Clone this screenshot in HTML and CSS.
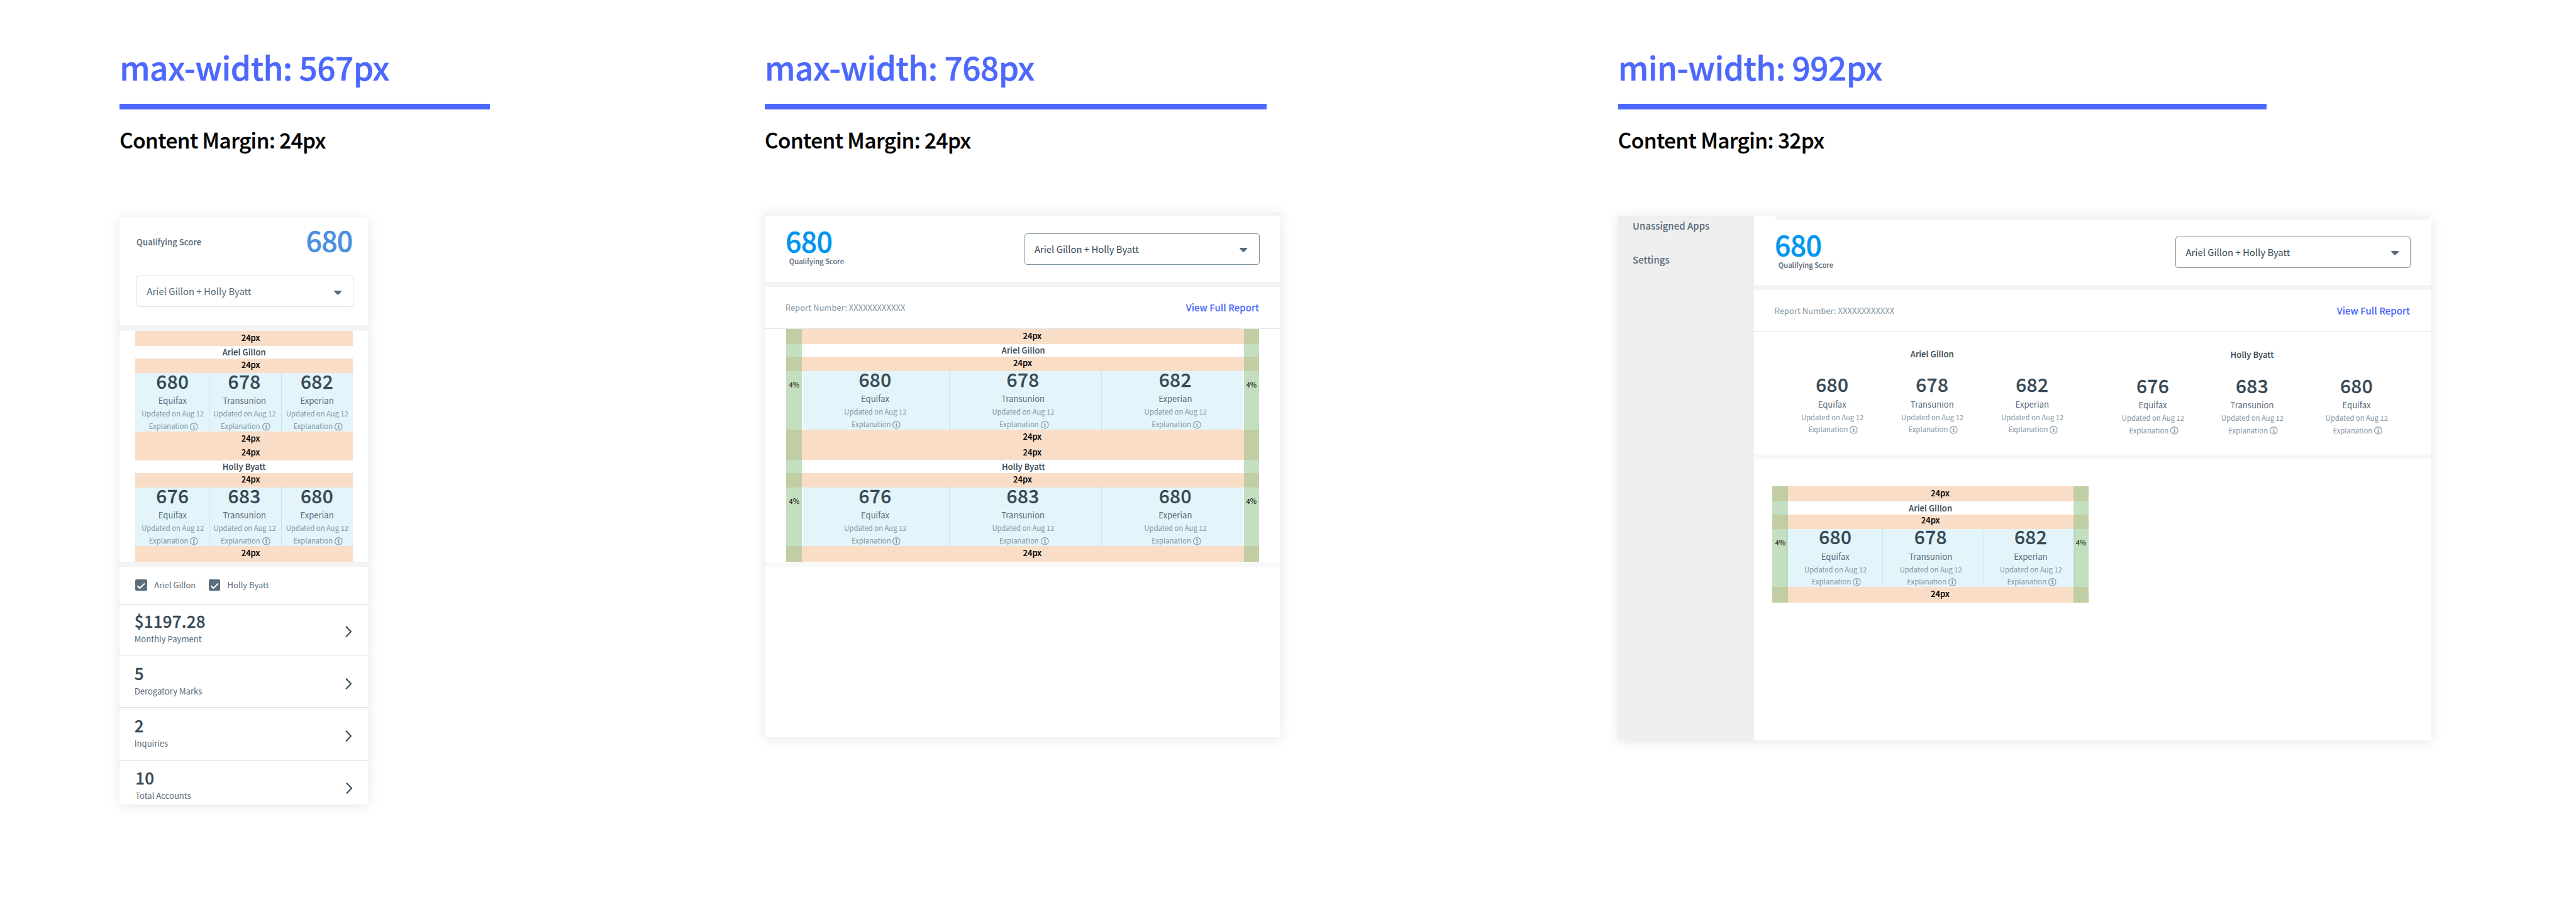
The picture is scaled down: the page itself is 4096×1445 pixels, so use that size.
FILE: index.html
```html
<!DOCTYPE html>
<html lang="en">
<head>
<meta charset="utf-8">
<title>Credit scores – breakpoints</title>
<link rel="stylesheet" href="styles.css">
</head>
<body>
<svg class="defs" aria-hidden="true">
  <symbol id="info" viewBox="0 0 24 24"><circle cx="12" cy="12" r="10.9" fill="none" stroke="currentColor" stroke-width="2.2"/><circle cx="12" cy="7" r="1.800" fill="currentColor"/><path d="M9.6 10.600h3v6.200M9.200 17.200h5.800" fill="none" stroke="currentColor" stroke-width="2.400"/></symbol>
  <symbol id="caret" viewBox="0 0 24 13"><path d="M2 0h20q3 .6 1.200 3L14 12q-2 2-4 0L.8 3Q-1 .6 2 0z" fill="currentColor"/></symbol>
  <symbol id="chevron" viewBox="0 0 20 35"><path d="M2 1.500L17.400 17.500 2 33.500" fill="none" stroke="currentColor" stroke-width="4"/></symbol>
  <symbol id="check" viewBox="0 0 36 36"><path d="M7 20l7 7L29 12.500" fill="none" stroke="currentColor" stroke-width="4.200"/></symbol>
</svg>
<main class="board">

  <section class="column column-sm">
    <h1 class="title">max-width: 567px</h1>
    <div class="rule"></div>
    <h2 class="subtitle">Content Margin: 24px</h2>
    <article class="card card-sm">
      <header class="head-sm">
        <div class="head-row">
          <span class="qualifying">Qualifying Score</span>
          <span class="score-big">680</span>
        </div>
        <div class="select select-light"><span>Ariel Gillon + Holly Byatt</span><svg class="caret"><use href="#caret"/></svg></div>
      </header>
      <div class="separator"></div>
      <div class="spec">
        <div class="band band-outer">24px</div>
        <div class="person">Ariel Gillon</div>
        <div class="band band-inner">24px</div>
        <div class="bureaus tinted">
          <div class="bureau"><b class="number">680</b><span class="name">Equifax</span><span class="updated">Updated on Aug 12</span><span class="explain">Explanation<svg class="info"><use href="#info"/></svg></span></div>
          <div class="bureau"><b class="number">678</b><span class="name">Transunion</span><span class="updated">Updated on Aug 12</span><span class="explain">Explanation<svg class="info"><use href="#info"/></svg></span></div>
          <div class="bureau"><b class="number">682</b><span class="name">Experian</span><span class="updated">Updated on Aug 12</span><span class="explain">Explanation<svg class="info"><use href="#info"/></svg></span></div>
        </div>
        <div class="band band-end">24px</div>
        <div class="band band-start">24px</div>
        <div class="person">Holly Byatt</div>
        <div class="band band-inner">24px</div>
        <div class="bureaus tinted">
          <div class="bureau"><b class="number">676</b><span class="name">Equifax</span><span class="updated">Updated on Aug 12</span><span class="explain">Explanation<svg class="info"><use href="#info"/></svg></span></div>
          <div class="bureau"><b class="number">683</b><span class="name">Transunion</span><span class="updated">Updated on Aug 12</span><span class="explain">Explanation<svg class="info"><use href="#info"/></svg></span></div>
          <div class="bureau"><b class="number">680</b><span class="name">Experian</span><span class="updated">Updated on Aug 12</span><span class="explain">Explanation<svg class="info"><use href="#info"/></svg></span></div>
        </div>
        <div class="band band-last">24px</div>
      </div>
      <div class="separator"></div>
      <div class="filters">
        <span class="box"><svg><use href="#check"/></svg></span><span class="filter-name">Ariel Gillon</span>
        <span class="box"><svg><use href="#check"/></svg></span><span class="filter-name">Holly Byatt</span>
      </div>
      <div class="stat stat-first"><div><b class="value">$1197.28</b><span class="label">Monthly Payment</span></div><svg class="chevron"><use href="#chevron"/></svg></div>
      <div class="stat"><div><b class="value">5</b><span class="label">Derogatory Marks</span></div><svg class="chevron"><use href="#chevron"/></svg></div>
      <div class="stat"><div><b class="value">2</b><span class="label">Inquiries</span></div><svg class="chevron"><use href="#chevron"/></svg></div>
      <div class="stat stat-last"><div><b class="value">10</b><span class="label">Total Accounts</span></div><svg class="chevron"><use href="#chevron"/></svg></div>
    </article>
  </section>

  <section class="column column-md">
    <h1 class="title">max-width: 768px</h1>
    <div class="rule"></div>
    <h2 class="subtitle">Content Margin: 24px</h2>
    <article class="card card-md">
      <div class="topline"></div>
      <header class="head">
        <div><div class="score-big">680</div><div class="qualifying-small">Qualifying Score</div></div>
        <div class="select"><span>Ariel Gillon + Holly Byatt</span><svg class="caret"><use href="#caret"/></svg></div>
      </header>
      <div class="separator"></div>
      <div class="report"><span>Report Number: XXXXXXXXXXXX</span><a>View Full Report</a></div>
      <div class="spec">
        <div class="band band-outer shifted">24px</div>
        <div class="person">Ariel Gillon</div>
        <div class="band band-inner">24px</div>
        <div class="bureaus tinted">
          <div class="bureau"><b class="number">680</b><span class="name">Equifax</span><span class="updated">Updated on Aug 12</span><span class="explain">Explanation<svg class="info"><use href="#info"/></svg></span></div>
          <div class="bureau"><b class="number">678</b><span class="name">Transunion</span><span class="updated">Updated on Aug 12</span><span class="explain">Explanation<svg class="info"><use href="#info"/></svg></span></div>
          <div class="bureau"><b class="number">682</b><span class="name">Experian</span><span class="updated">Updated on Aug 12</span><span class="explain">Explanation<svg class="info"><use href="#info"/></svg></span></div>
        </div>
        <div class="band band-end shifted">24px</div>
        <div class="band band-start shifted">24px</div>
        <div class="person">Holly Byatt</div>
        <div class="band band-inner">24px</div>
        <div class="bureaus tinted">
          <div class="bureau"><b class="number">676</b><span class="name">Equifax</span><span class="updated">Updated on Aug 12</span><span class="explain">Explanation<svg class="info"><use href="#info"/></svg></span></div>
          <div class="bureau"><b class="number">683</b><span class="name">Transunion</span><span class="updated">Updated on Aug 12</span><span class="explain">Explanation<svg class="info"><use href="#info"/></svg></span></div>
          <div class="bureau"><b class="number">680</b><span class="name">Experian</span><span class="updated">Updated on Aug 12</span><span class="explain">Explanation<svg class="info"><use href="#info"/></svg></span></div>
        </div>
        <div class="band band-last shifted">24px</div>
        <div class="gutter gutter-left"><span>4%</span><span>4%</span></div>
        <div class="gutter gutter-right"><span>4%</span><span>4%</span></div>
      </div>
      <div class="separator separator-pale"></div>
    </article>
  </section>

  <section class="column column-lg">
    <h1 class="title">min-width: 992px</h1>
    <div class="rule"></div>
    <h2 class="subtitle">Content Margin: 32px</h2>
    <article class="card card-lg">
      <nav class="sidebar"><a>Unassigned Apps</a><a>Settings</a></nav>
      <div class="content">
        <div class="topline"></div>
        <header class="head">
          <div><div class="score-big">680</div><div class="qualifying-small">Qualifying Score</div></div>
          <div class="select"><span>Ariel Gillon + Holly Byatt</span><svg class="caret"><use href="#caret"/></svg></div>
        </header>
        <div class="separator"></div>
        <div class="report"><span>Report Number: XXXXXXXXXXXX</span><a>View Full Report</a></div>
        <div class="groups">
          <div class="group">
            <div class="person">Ariel Gillon</div>
            <div class="bureaus">
              <div class="bureau"><b class="number">680</b><span class="name">Equifax</span><span class="updated">Updated on Aug 12</span><span class="explain">Explanation<svg class="info"><use href="#info"/></svg></span></div>
              <div class="bureau"><b class="number">678</b><span class="name">Transunion</span><span class="updated">Updated on Aug 12</span><span class="explain">Explanation<svg class="info"><use href="#info"/></svg></span></div>
              <div class="bureau"><b class="number">682</b><span class="name">Experian</span><span class="updated">Updated on Aug 12</span><span class="explain">Explanation<svg class="info"><use href="#info"/></svg></span></div>
            </div>
          </div>
          <div class="group group-second">
            <div class="person">Holly Byatt</div>
            <div class="bureaus">
              <div class="bureau"><b class="number">676</b><span class="name">Equifax</span><span class="updated">Updated on Aug 12</span><span class="explain">Explanation<svg class="info"><use href="#info"/></svg></span></div>
              <div class="bureau"><b class="number">683</b><span class="name">Transunion</span><span class="updated">Updated on Aug 12</span><span class="explain">Explanation<svg class="info"><use href="#info"/></svg></span></div>
              <div class="bureau"><b class="number">680</b><span class="name">Equifax</span><span class="updated">Updated on Aug 12</span><span class="explain">Explanation<svg class="info"><use href="#info"/></svg></span></div>
            </div>
          </div>
        </div>
        <div class="separator separator-pale"></div>
        <div class="spec">
          <div class="band band-outer shifted">24px</div>
          <div class="person">Ariel Gillon</div>
          <div class="band band-inner">24px</div>
          <div class="bureaus tinted">
            <div class="bureau"><b class="number">680</b><span class="name">Equifax</span><span class="updated">Updated on Aug 12</span><span class="explain">Explanation<svg class="info"><use href="#info"/></svg></span></div>
            <div class="bureau"><b class="number">678</b><span class="name">Transunion</span><span class="updated">Updated on Aug 12</span><span class="explain">Explanation<svg class="info"><use href="#info"/></svg></span></div>
            <div class="bureau"><b class="number">682</b><span class="name">Experian</span><span class="updated">Updated on Aug 12</span><span class="explain">Explanation<svg class="info"><use href="#info"/></svg></span></div>
          </div>
          <div class="band band-last shifted">24px</div>
          <div class="gutter gutter-left"><span>4%</span></div>
          <div class="gutter gutter-right"><span>4%</span></div>
        </div>
      </div>
    </article>
  </section>

</main>
</body>
</html>
```
FILE: styles.css
```css
/* 1rem = 100 units of a 7882-unit-wide board */
html { font-size: calc(100vw / 78.82); }
* { box-sizing: border-box; }
body {
  margin: 0;
  background: #fff;
  font-family: "Noto Sans CJK SC", "Open Sans", sans-serif;
  overflow: hidden;
}
h1, h2 { margin: 0; }
span, b, a { display: block; white-space: nowrap; }
svg { display: block; flex: none; }
.defs { display: none; }

.board { display: flex; height: 27.8rem; padding: 1.45rem 0 0 3.66rem; }
.column { flex: none; }
.column-sm { width: 19.74rem; --rule: 11.34rem; --gap: 1.965rem; }
.column-md { width: 26.11rem; --rule: 15.36rem; --gap: 1.785rem; }
.column-lg { width: 24.88rem; --rule: 19.85rem; --gap: 1.925rem; }

.title {
  color: #4d68fc;
  font-size: .99rem;
  font-weight: 500;
  line-height: 1.2rem;
  letter-spacing: -.011rem;
  white-space: nowrap;
  -webkit-text-stroke: .01em;
}
.rule { width: var(--rule); height: .16rem; margin-top: .53rem; background: #4d68fc; }
.subtitle {
  margin-top: .533rem;
  color: #000;
  font-size: .64rem;
  font-weight: 500;
  line-height: .8rem;
  letter-spacing: -.01rem;
  -webkit-text-stroke: .01em;
}

.card {
  margin-top: var(--gap);
  background: #fff;
  box-shadow: 0 .06rem .36rem rgba(0, 0, 0, .105);
  overflow: hidden;
}
.card-sm { width: 7.6rem; height: 17.98rem; }
.card-md { width: 15.78rem; height: 16.1rem; padding-top: .02rem; }
.card-lg { display: flex; width: 24.88rem; height: 16.06rem; }

.separator { height: .16rem; background: #f4f4f4; }
.separator-pale { background: #f8f8f8; }
.topline { height: .12rem; background: #f4f4f4; }

/* headers */
.head-sm { height: 3.32rem; }
.head-row { display: flex; justify-content: space-between; align-items: flex-start; padding: .24rem .473rem 0 .518rem; }
.qualifying {
  margin-top: .34rem;
  color: #5a6c7b;
  font-size: .2507rem;
  font-weight: 500;
  line-height: .4rem;
  letter-spacing: .0015rem;
  -webkit-text-stroke: .01em;
}
.score-big {
  color: #0095ee;
  font-size: .86rem;
  font-weight: 500;
  line-height: .94rem;
  letter-spacing: -.015rem;
  -webkit-text-stroke: .01em;
}
.card-sm .score-big { color: #4a90e2; }
.qualifying-small {
  margin-left: .11rem;
  color: #5a6c7b;
  font-size: .215rem;
  font-weight: 500;
  line-height: .32rem;
  -webkit-text-stroke: .01em;
}
.select {
  display: flex;
  justify-content: space-between;
  align-items: center;
  width: 7.2rem;
  height: .96rem;
  padding: .01rem .35rem 0 .295rem;
  border: 1px solid #7f92a0;
  border-radius: .08rem;
  color: #374955;
  font-size: .2865rem;
  line-height: .4rem;
}
.select-light { width: 6.64rem; margin: .62rem 0 0 .52rem; border-color: #d9e0e6; color: #5a6c7b; }
.caret { width: .24rem; height: .13rem; margin-top: .04rem; color: #5a6c7b; }
.select-light .caret { margin-top: .08rem; }

.head { display: flex; justify-content: space-between; align-items: flex-start; }
.card-md .head { height: 2.02rem; padding: .3rem .64rem 0 .637rem; }
.card-md .select { margin-top: .245rem; }
.card-lg .head { height: 2rem; padding: .283rem .624rem 0 .647rem; }
.card-lg .select { margin-top: .24rem; }

.report {
  display: flex;
  justify-content: space-between;
  height: 1.28rem;
  padding: .443rem .655rem 0 .63rem;
  border-bottom: 1px solid #dae2e8;
  color: #8496a4;
  font-size: .2512rem;
  line-height: .4rem;
}
.report a { color: #4d68fc; font-size: .2865rem; font-weight: 500; letter-spacing: .001rem; -webkit-text-stroke: .01em; }

/* spacing specification */
.spec { position: relative; }
.card-sm .spec { margin: 0 .46rem 0 .48rem; }
.card-md .spec { margin: 0 .66rem; }
.card-lg .spec { width: 9.674rem; margin: .82rem 0 0 .573rem; }

.band {
  height: .44rem;
  padding-top: .01rem;
  background: #f9ddc6;
  color: #000;
  font-size: .2507rem;
  font-weight: 500;
  line-height: .4rem;
  letter-spacing: .001rem;
  text-align: center;
  -webkit-text-stroke: .014em;
}
.band-outer { height: .46rem; padding-top: .02rem; }
.band-inner { line-height: .34rem; }
.band-end { padding-top: .02rem; }
.band-start { line-height: .38rem; }
.band-last { height: .48rem; padding-top: .02rem; }
.card-sm .band { padding-left: .4rem; }
.card-md .band-end { height: .46rem; }
.card-md .band-start { height: .48rem; padding-top: .04rem; }
.shifted { padding-left: .59rem; }

.person {
  height: .4rem;
  padding-top: .01rem;
  color: #374955;
  font-size: .2507rem;
  font-weight: 500;
  line-height: .38rem;
  letter-spacing: .0015rem;
  text-align: center;
  -webkit-text-stroke: .01em;
}
.card-md .person { padding-left: .05rem; }

.bureaus { display: grid; height: 1.78rem; }
.tinted { background: #e3f5fa; }
.tinted .bureau + .bureau { border-left: 1px solid #bce8f1; }
.card-sm .bureaus { grid-template-columns: 2.24rem 2.22rem 2.2rem; }
.card-sm .bureau:nth-child(1) { padding-left: .04rem; }
.card-sm .bureau:nth-child(2) { padding-right: .04rem; }
.card-sm .bureau:nth-child(3) { padding-right: .02rem; }
.card-md .bureaus { grid-template-columns: 4.465rem 4.655rem 4.335rem; margin: 0 .49rem 0 .515rem; }
.card-md .bureau:nth-child(1) { padding-right: .06rem; }
.card-md .bureau:nth-child(2) { padding-right: .15rem; }
.card-md .bureau:nth-child(3) { padding-left: .18rem; }
.card-lg .spec .bureaus { grid-template-columns: 2.955rem 3.09rem 2.825rem; margin: 0 .387rem 0 .417rem; }
.card-lg .spec .bureau:nth-child(1) { padding-left: .06rem; }
.card-lg .spec .bureau:nth-child(2) { padding-right: .17rem; }
.card-lg .spec .bureau:nth-child(3) { padding-left: .04rem; }

.bureau { display: flex; flex-direction: column; align-items: center; }
.number {
  margin-top: .014rem;
  color: #374955;
  font-size: .573rem;
  font-weight: 500;
  line-height: .44rem;
  letter-spacing: .008rem;
  -webkit-text-stroke: .01em;
}
.name { margin-top: .218rem; color: #5a6c7b; font-size: .2525rem; line-height: .36rem; }
.updated { margin-top: .049rem; padding-left: .016rem; color: #8496a4; font-size: .2165rem; line-height: .32rem; }
.explain {
  display: flex;
  align-items: center;
  gap: .055rem;
  margin-top: .053rem;
  padding-left: .06rem;
  color: #8496a4;
  font-size: .2175rem;
  line-height: .32rem;
}
.info { width: .245rem; height: .245rem; margin-top: .035rem; overflow: visible; }

.gutter {
  position: absolute;
  top: 0;
  bottom: 0;
  width: .48rem;
  background: rgba(137, 191, 129, .5);
  color: #000;
  font-size: .215rem;
  line-height: .32rem;
  text-align: center;
}
.gutter-left { left: 0; }
.gutter-right { right: 0; width: .46rem; }
.gutter span { margin-top: 1.55rem; }
.gutter span + span { margin-top: 3.24rem; }

/* small card: filters and stats */
.filters { display: flex; align-items: flex-start; height: 1.16rem; padding: .366rem 0 0 .48rem; border-bottom: 1px solid #d9e1e7; }
.box { width: .36rem; height: .36rem; margin-top: .014rem; border-radius: .04rem; background: #5b6c7a; color: #fff; }
.box svg { width: 100%; height: 100%; }
.filter-name { margin: 0 .39rem 0 .218rem; color: #5a6c7b; font-size: .2507rem; line-height: .4rem; }
.stat {
  display: flex;
  justify-content: space-between;
  align-items: flex-start;
  height: 1.6rem;
  padding: .17rem .5rem 0 .453rem;
  border-bottom: 1px solid #d9e1e7;
}
.stat-first { height: 1.56rem; padding-top: .135rem; }
.stat-last { height: 1.36rem; padding-right: .48rem; padding-left: .48rem; border-bottom: 0; }
.value {
  color: #374955;
  font-size: .501rem;
  font-weight: 500;
  line-height: .72rem;
  letter-spacing: .0035rem;
  -webkit-text-stroke: .01em;
}
.label { margin-top: .012rem; color: #5a6c7b; font-size: .252rem; line-height: .4rem; }
.chevron { width: .2rem; height: .35rem; margin-top: .51rem; color: #374955; }

/* large card */
.sidebar { flex: none; width: 4.15rem; padding: .122rem 0 0 .448rem; background: #efefef; }
.sidebar a { color: #5a6c7b; font-size: .2865rem; font-weight: 500; line-height: .4rem; letter-spacing: .001rem; -webkit-text-stroke: .006em; }
.sidebar a + a { margin-top: .636rem; }
.content { flex: 1; }
.card-lg .topline { margin: 0 .055rem 0 .656rem; }
.card-lg .report { padding-left: .637rem; padding-right: .65rem; }
.groups { display: flex; height: 3.74rem; padding: .477rem 0 0 .87rem; }
.group { width: 9.18rem; }
.group .bureaus { grid-template-columns: repeat(3, 3.06rem); margin-top: .488rem; }
.group-second { width: 9.43rem; margin: .025rem 0 0 .641rem; }
.group-second .bureaus { grid-template-columns: 3.04rem 3.04rem 3.35rem; }
.group-second .person { padding-right: .31rem; }
```
